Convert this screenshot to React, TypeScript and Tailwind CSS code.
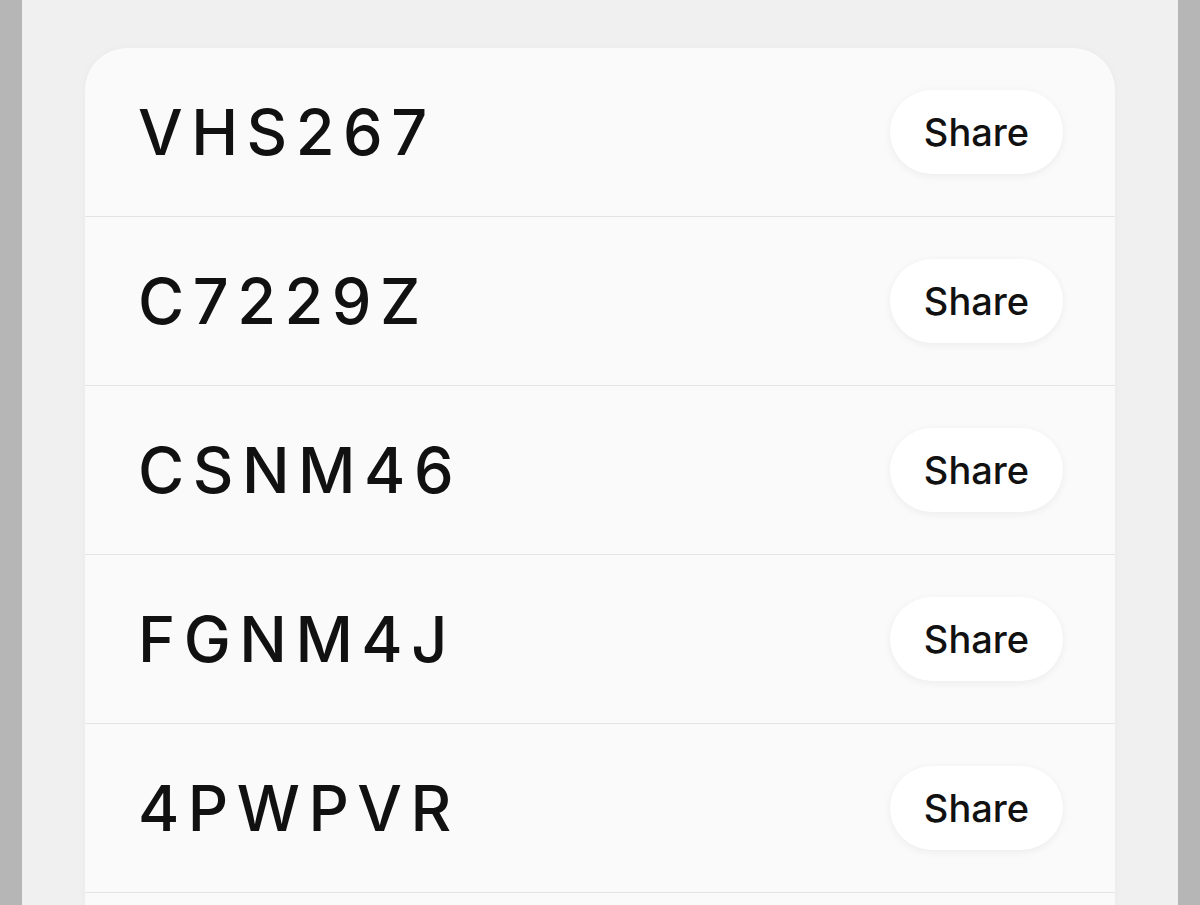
import { useState } from 'react';

const codes = ['VHS267', 'C7229Z', 'CSNM46', 'FGNM4J', '4PWPVR'];

function CodeRow({ code }: { code: string }) {
  const [copied, setCopied] = useState(false);

  return (
    <div className="flex h-[169px] shrink-0 items-center justify-between border-b border-[#e4e4e4] pl-[53px] pr-[52px]">
      <span className="text-[63px] font-medium leading-none tracking-[8.5px] text-[#111]">{code}</span>
      <button
        onClick={() => setCopied(!copied)}
        className="flex h-[84px] w-[173px] items-center justify-center rounded-full bg-white text-[38px] font-medium text-[#111] shadow-[0_2px_8px_rgba(0,0,0,0.06)]"
      >
        Share
      </button>
    </div>
  );
}

export default function App() {
  return (
    <div className="flex h-[905px] w-full overflow-hidden bg-[#b6b6b6] font-['Inter','Liberation_Sans',sans-serif]">
      <div className="mx-[22px] flex flex-1 flex-col bg-[#f0f0f0] pt-[48px]">
        {/* Codes card */}
        <div className="mx-[63px] flex flex-1 flex-col overflow-hidden rounded-t-[42px] bg-[#fafafa] shadow-[0_0_10px_rgba(0,0,0,0.03)]">
          {codes.map((c) => (
            <CodeRow key={c} code={c} />
          ))}
          <div className="flex-1" />
        </div>
      </div>
    </div>
  );
}
